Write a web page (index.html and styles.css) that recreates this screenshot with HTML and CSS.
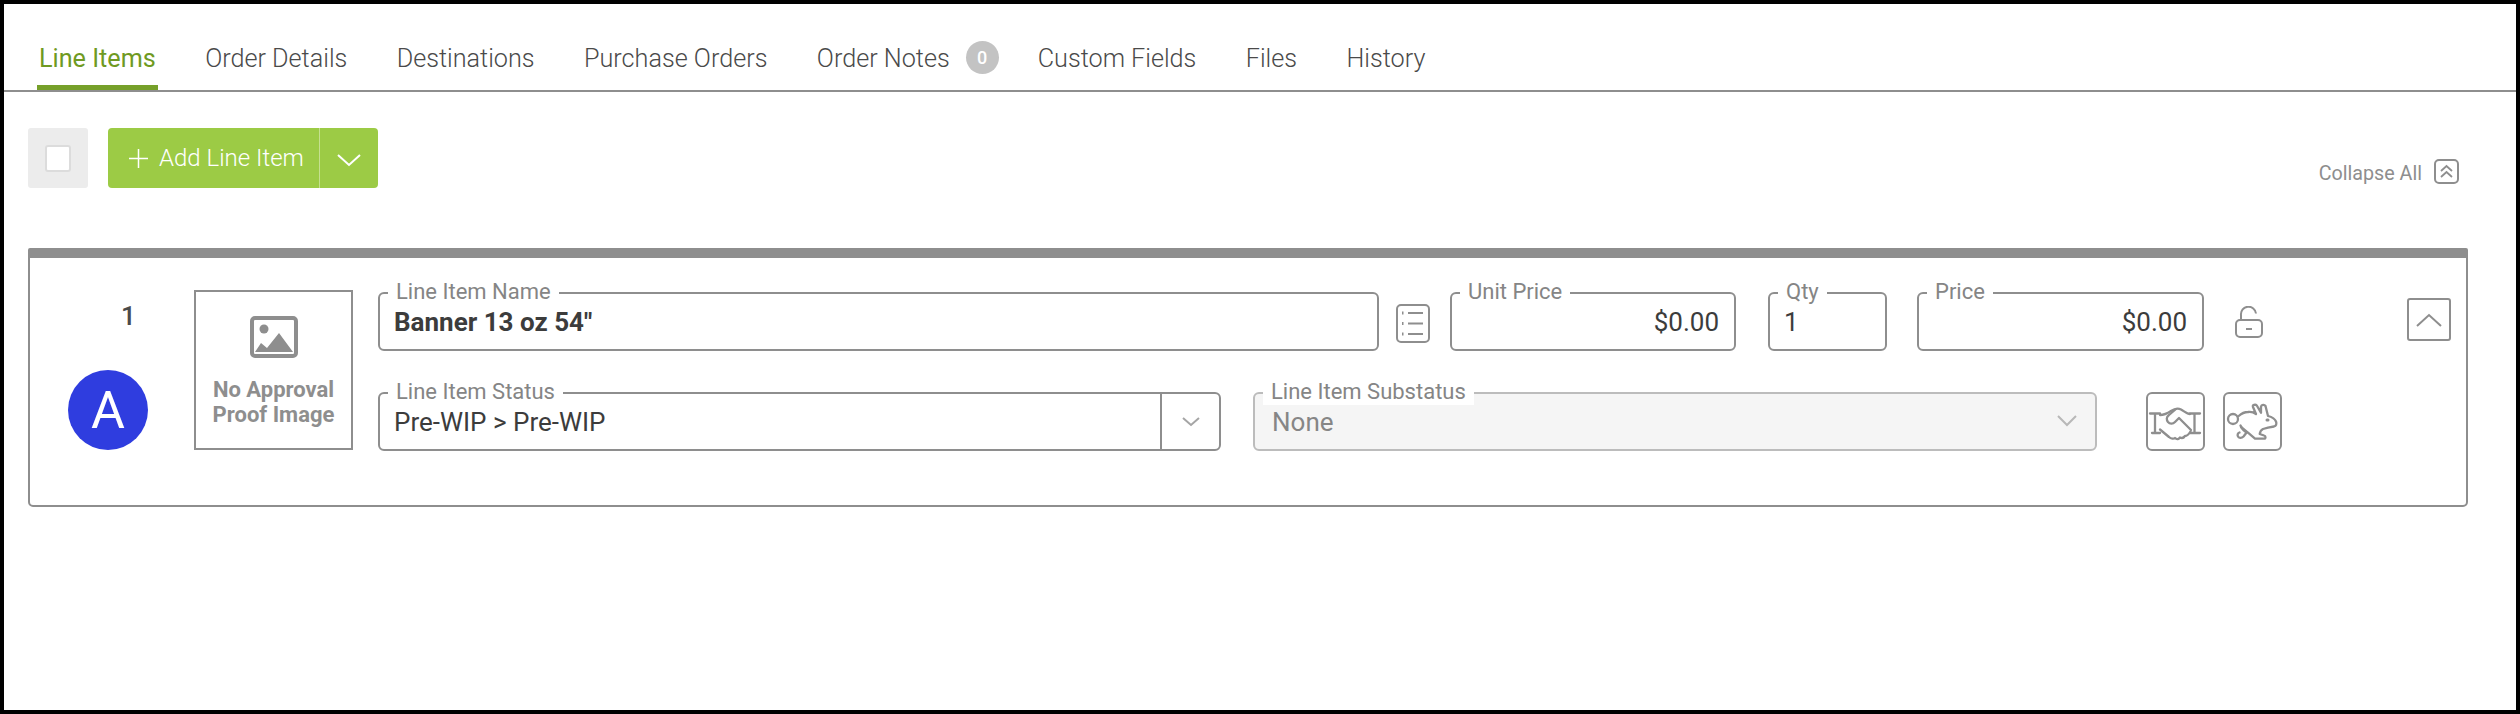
FILE: index.html
```html
<!DOCTYPE html>
<html lang="en">
<head>
<meta charset="utf-8">
<title>Line Items</title>
<link rel="stylesheet" href="styles.css">
</head>
<body>
<div class="frame">
  <nav class="tabs">
    <a class="tab active">Line Items</a>
    <a class="tab">Order Details</a>
    <a class="tab">Destinations</a>
    <a class="tab">Purchase Orders</a>
    <a class="tab tab-notes">Order Notes</a>
    <span class="badge">0</span>
    <a class="tab">Custom Fields</a>
    <a class="tab">Files</a>
    <a class="tab">History</a>
  </nav>

  <div class="toolbar">
    <div class="check-box"><span class="check"></span></div>
    <div class="add-btn">
      <div class="add-main">
        <svg class="plus" viewBox="0 0 19 19"><path d="M9.500 0v19M0 9.500h19"/></svg>
        <span class="add-label">Add Line Item</span>
      </div>
      <div class="add-caret">
        <svg viewBox="0 0 24 14"><path d="M1 2l11 10L23 2"/></svg>
      </div>
    </div>
    <div class="collapse-all">
      <span class="collapse-text">Collapse All</span>
      <span class="collapse-icon">
        <svg viewBox="0 0 21 21"><path d="M5 10l5.500-5 5.500 5M5 16l5.500-5 5.500 5"/></svg>
      </span>
    </div>
  </div>

  <section class="card">
    <div class="card-body">
      <div class="item-id">
        <div class="item-no">1</div>
        <div class="avatar">A</div>
      </div>
      <div class="proof">
        <svg class="proof-icon" viewBox="0 0 48 42">
          <rect x="2" y="2" width="44" height="38" rx="3" class="pi-frame"/>
          <circle cx="14" cy="13" r="4.500" class="pi-fill"/>
          <path d="M5 36l6-9 6 5 12-15 14 19z" class="pi-fill"/>
        </svg>
        <div class="proof-text">No Approval<br>Proof Image</div>
      </div>
      <div class="fields">
        <div class="row">
          <div class="field f-name"><label>Line Item Name</label><div class="val strong">Banner 13 oz 54"</div></div>
          <svg class="list-icon" viewBox="0 0 34 39">
            <rect x="1" y="1" width="32" height="37" rx="4"/>
            <path d="M12 9h15M12 19.500h15M12 30h15"/>
            <path class="dots" d="M6 9h1.500M6 19.500h1.500M6 30h1.500"/>
          </svg>
          <div class="field f-unit"><label>Unit Price</label><div class="val right">$0.00</div></div>
          <div class="field f-qty"><label>Qty</label><div class="val">1</div></div>
          <div class="field f-price"><label>Price</label><div class="val right">$0.00</div></div>
          <svg class="lock-icon" viewBox="0 0 28 32">
            <rect x="1" y="14" width="26" height="17" rx="4"/>
            <path d="M6 14V9a7.500 7.500 0 0 1 15-1.500"/>
            <path d="M11 23h6"/>
          </svg>
          <button class="toggle">
            <svg viewBox="0 0 26 14"><path d="M1 13L13 2l12 11"/></svg>
          </button>
        </div>
        <div class="row row-2">
          <div class="field f-status">
            <label>Line Item Status</label>
            <div class="val">Pre-WIP &gt; Pre-WIP</div>
            <div class="caret-cell"><svg viewBox="0 0 18 10"><path d="M1 1l8 7 8-7"/></svg></div>
          </div>
          <div class="field f-sub">
            <label>Line Item Substatus</label>
            <div class="val">None</div>
            <svg class="sub-caret" viewBox="0 0 20 12"><path d="M1 1l9 9 9-9"/></svg>
          </div>
          <button class="icon-btn btn-first">
            <svg viewBox="0 0 55 55">
              <path d="M2 19.500h10M7 19.500v19.500M4 39h8M52 19.500H42M46.500 19.500v19.500M52 39H42"/>
              <path d="M12 21c5 0 8-2 11-4 3-2 7-3 10-1.500 3 1.500 6 4.500 9 4.500"/>
              <path d="M28 15l-7 6c-3 2-2.500 5-1 7 2 2.500 5 2 7 0l4-4 12 12"/>
              <path d="M12 35.500l9 7.500c2 2 5 2 6 1 2 2 4 1 5-.5 2 1 4 0 5-1.500 2 0 4-2 5.500-4.500"/>
            </svg>
          </button>
          <button class="icon-btn">
            <svg viewBox="0 0 55 55">
              <circle cx="8" cy="25" r="5"/>
              <path d="M13.700 22c3.300-3 6.300-4 9.300-4 3-.5 6 .5 8 2l-3-7c-.7-2 2.300-3 3.800-1.500l4.200 7.200v-6.200c.5-2 3.500-2 4.500-.5l2.500 10c4 1 7 3 8 5.500 1 2.500 0 4.500-2 5l-6 1.200-5 1.300c-2 1-3 3-3.300 5l4.300 1.500c2 .5 2 3.200 0 3.200h-9l-7-6c-3-.7-6-3.700-7.500-7.200"/>
              <path d="M16 33l6 5-3.500 4.500c-2 2-5 1.500-5.500 0-1-2 0-3.500 1.500-4"/>
              <path class="dots" d="M42 26h1"/>
            </svg>
          </button>
        </div>
      </div>
    </div>
  </section>
</div>
</body>
</html>
```
FILE: styles.css
```css
* { box-sizing: border-box; }
html, body { margin: 0; padding: 0; }
body { font-family: Roboto, "Noto Sans", sans-serif; color: #3c3c3c; background: #fff; }

.frame {
  width: 2520px;
  height: 714px;
  border: 4px solid #000;
  overflow: hidden;
  background: #fff;
}

.tabs {
  display: flex;
  align-items: flex-start;
  height: 88px;
  padding-left: 33px;
  border-bottom: 2px solid #8e8e8e;
  font-size: 25.200px;
  font-weight: 300;
}
.tab {
  padding: 38px 2px 9px;
  line-height: 34px;
  height: 86px;
  margin-right: 45.400px;
  color: #4a4a4a;
  white-space: nowrap;
  border-bottom: 5px solid transparent;
}
.tab.active { color: #6f9a22; border-bottom-color: #76a02a; font-weight: 400; }
.tab-notes { margin-right: 14px; }
.badge {
  flex: none;
  width: 33px;
  height: 33px;
  margin: 37px 37px 0 0;
  border-radius: 50%;
  background: #c3c3c3;
  color: #fff;
  font-size: 18px;
  font-weight: 500;
  line-height: 33px;
  text-align: center;
}

.toolbar {
  display: flex;
  gap: 20px;
  margin-top: 36px;
  padding: 0 57px 0 24px;
  height: 60px;
}
.check-box {
  width: 60px;
  height: 60px;
  flex: none;
  background: #ececec;
  border-radius: 3px;
  display: flex;
  align-items: center;
  justify-content: center;
}
.check {
  width: 26px;
  height: 27px;
  background: #fff;
  border: 2px solid #dcdcdc;
  border-radius: 3px;
}
.add-btn {
  display: flex;
  flex: none;
  width: 270px;
  height: 60px;
  background: #9ccb45;
  border-radius: 4px;
  color: #fff;
}
.add-main {
  width: 212px;
  display: flex;
  align-items: center;
  padding-left: 21px;
  border-right: 1px solid #c5e08f;
}
.plus { width: 19px; height: 19px; fill: none; stroke: #fff; stroke-width: 1.500; margin-right: 11px; flex: none; }
.add-label { font-size: 24px; font-weight: 300; white-space: nowrap; }
.add-caret { flex: 1; display: flex; align-items: center; justify-content: center; padding-top: 4px; }
.add-caret svg { width: 24px; height: 14px; fill: none; stroke: #fff; stroke-width: 2; }

.collapse-all {
  margin-left: auto;
  align-self: flex-end;
  margin-bottom: 3px;
  display: flex;
  align-items: center;
  gap: 12px;
  font-size: 19.700px;
  color: #8e8e8e;
}
.collapse-text { padding-top: 5px; }
.collapse-icon {
  width: 25px;
  height: 25px;
  border: 2px solid #8e8e8e;
  border-radius: 5px;
}
.collapse-icon svg { display: block; width: 21px; height: 21px; fill: none; stroke: #8e8e8e; stroke-width: 1.800; }

.card {
  margin: 60px 0 0 24px;
  width: 2440px;
  height: 259px;
  border: 2px solid #8e8e8e;
  border-top: 10px solid #8e8e8e;
  border-radius: 2px 2px 5px 5px;
}
.card-body { display: flex; padding-top: 32px; }
.item-id { width: 164px; flex: none; }
.item-no { margin: 11px 0 0 91px; font-size: 26px; font-weight: 500; line-height: 30px; color: #4a4a4a; }
.avatar {
  width: 80px;
  height: 80px;
  margin: 39px 0 0 38px;
  border-radius: 50%;
  background: #2f3ddf;
  color: #fff;
  font-size: 52px;
  line-height: 82px;
  text-align: center;
}
.proof {
  width: 159px;
  height: 160px;
  flex: none;
  border: 2px solid #8e8e8e;
  text-align: center;
  padding-top: 24px;
}
.proof-icon { display: block; width: 48px; height: 42px; margin: 0 auto; }
.pi-frame { fill: none; stroke: #8e8e8e; stroke-width: 4; }
.pi-fill { fill: #8e8e8e; }
.proof-text { margin-top: 19px; font-size: 22px; font-weight: 700; line-height: 25px; color: #8e8e8e; }

.fields { margin: 2px 0 0 25px; flex: 1; }
.row { display: flex; height: 59px; align-items: flex-start; }
.row-2 { margin-top: 41px; }

.field {
  position: relative;
  height: 59px;
  border: 2px solid #8e8e8e;
  border-radius: 6px;
  flex: none;
}
.field label {
  position: absolute;
  top: -15px;
  left: 8px;
  padding: 0 8px;
  background: #fff;
  font-size: 22px;
  line-height: 26px;
  color: #858585;
  white-space: nowrap;
}
.val {
  font-size: 26px;
  line-height: 30px;
  padding: 13px 15px 0 14px;
  color: #3c3c3c;
  white-space: nowrap;
}
.val.right { text-align: right; }
.val.strong { font-weight: 700; }

.f-name { width: 1001px; }
.list-icon { width: 34px; height: 39px; margin: 12px 20px 0 17px; flex: none; fill: none; stroke: #8e8e8e; stroke-width: 2; }
.list-icon .dots, .icon-btn .dots { stroke-width: 3; }
.f-unit { width: 286px; }
.f-qty { width: 119px; margin-left: 32px; }
.f-price { width: 287px; margin-left: 30px; }
.lock-icon { width: 28px; height: 32px; margin: 14px 0 0 31px; flex: none; fill: none; stroke: #8e8e8e; stroke-width: 2; }
.toggle {
  width: 44px;
  height: 43px;
  margin: 6px 0 0 144px;
  padding: 0;
  background: #fff;
  border: 2px solid #8e8e8e;
  border-radius: 3px;
  display: flex;
  align-items: center;
  justify-content: center;
}
.toggle svg { width: 26px; height: 14px; fill: none; stroke: #8e8e8e; stroke-width: 2; }

.f-status { width: 843px; padding-right: 59px; }
.caret-cell {
  position: absolute;
  top: 0;
  right: 0;
  width: 59px;
  height: 55px;
  border-left: 2px solid #8e8e8e;
  display: flex;
  align-items: center;
  justify-content: center;
}
.caret-cell svg { width: 18px; height: 10px; fill: none; stroke: #a5a5a5; stroke-width: 2; }
.f-sub { width: 844px; margin-left: 32px; background: #f5f5f5; border-color: #bcbcbc; }
.f-sub .val { padding-left: 17px; color: #868686; }
.sub-caret { position: absolute; top: 21px; right: 18px; width: 20px; height: 12px; fill: none; stroke: #b8b8b8; stroke-width: 2; }

.icon-btn {
  width: 59px;
  height: 59px;
  margin-left: 18px;
  padding: 0;
  background: #fff;
  border: 2px solid #8e8e8e;
  border-radius: 6px;
  flex: none;
}
.btn-first { margin-left: 49px; }
.icon-btn svg { display: block; width: 55px; height: 55px; fill: none; stroke: #8e8e8e; stroke-width: 2.300; stroke-linecap: round; stroke-linejoin: round; }
```
